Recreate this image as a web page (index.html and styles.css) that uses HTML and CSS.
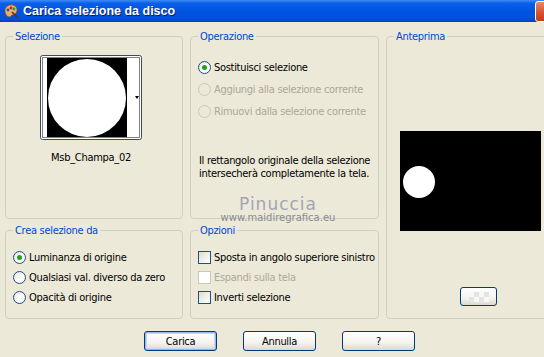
FILE: index.html
```html
<!DOCTYPE html>
<html lang="it">
<head>
    <meta charset="UTF-8">
    <title>Carica selezione da disco</title>
    <link rel="stylesheet" href="styles.css">
</head>
<body>
    <div class="titlebar">
        <svg class="app-icon" width="16" height="16" viewBox="0 0 16 16">
            <path d="M2 9 C1 4 6 1 10 2 C14 3 15 7 13 10 C11 13 9 11 8 13 C7 15 3 14 2 9 Z" fill="#e8b070" stroke="#8a4a20" stroke-width="0.8"/>
            <circle cx="5" cy="7" r="1.4" fill="#2050d0"/>
            <circle cx="8" cy="5" r="1.4" fill="#d02020"/>
            <circle cx="11" cy="6" r="1.4" fill="#20a030"/>
            <path d="M9 9 L15 15" stroke="#603010" stroke-width="1.6"/>
        </svg>
        <span class="title">Carica selezione da disco</span>
        <span class="close-btn"></span>
    </div>

    <div class="dialog">
        <div class="groups">
            <fieldset class="group sel-group">
                <legend>Selezione</legend>
                <div class="thumb">
                    <svg width="102" height="85" viewBox="0 0 102 85">
                        <rect x="0.5" y="0.5" width="101" height="84" rx="2" fill="#fff" stroke="#3c4a5a"/>
                        <rect x="2.5" y="2.5" width="97" height="80" fill="none" stroke="#000" stroke-dasharray="1 1"/>
                        <rect x="7" y="3" width="80" height="79" fill="#000"/>
                        <circle cx="47" cy="43" r="39" fill="#fff"/>
                        <path d="M95 41 L99 41 L97 44 Z" fill="#000"/>
                    </svg>
                </div>
                <div class="thumb-name">Msb_Champa_02</div>
            </fieldset>

            <fieldset class="group op-group">
                <legend>Operazione</legend>
                <div class="options op-options">
                    <div class="opt"><span class="radio checked"></span>Sostituisci selezione</div>
                    <div class="opt disabled"><span class="radio"></span>Aggiungi alla selezione corrente</div>
                    <div class="opt disabled"><span class="radio"></span>Rimuovi dalla selezione corrente</div>
                </div>
                <p class="info">Il rettangolo originale della selezione<br>intersecherà completamente la tela.</p>
            </fieldset>

            <fieldset class="group preview-group">
                <legend>Anteprima</legend>
                <div class="preview">
                    <svg width="141" height="100" viewBox="0 0 141 100">
                        <rect width="141" height="100" fill="#000"/>
                        <circle cx="19" cy="51" r="16" fill="#fff"/>
                    </svg>
                </div>
                <button class="btn small-btn"><span class="checker"></span></button>
            </fieldset>

            <fieldset class="group">
                <legend>Crea selezione da</legend>
                <div class="options">
                    <div class="opt"><span class="radio checked"></span>Luminanza di origine</div>
                    <div class="opt"><span class="radio"></span>Qualsiasi val. diverso da zero</div>
                    <div class="opt"><span class="radio"></span>Opacità di origine</div>
                </div>
            </fieldset>

            <fieldset class="group">
                <legend>Opzioni</legend>
                <div class="options">
                    <div class="opt"><span class="check"></span>Sposta in angolo superiore sinistro</div>
                    <div class="opt disabled"><span class="check"></span>Espandi sulla tela</div>
                    <div class="opt"><span class="check"></span>Inverti selezione</div>
                </div>
            </fieldset>
        </div>

        <div class="buttons">
            <button class="btn default-btn">Carica</button>
            <button class="btn">Annulla</button>
            <button class="btn">?</button>
        </div>

        <div class="watermark">
            <span class="wm-name">Pinuccia</span>
            <span class="wm-url">www.maidiregrafica.eu</span>
        </div>
    </div>
</body>
</html>
```

FILE: styles.css
```css
body {
    margin: 0;
    width: 544px;
    height: 357px;
    overflow: hidden;
    background: #ece9d8;
    font-family: 'DejaVu Sans Condensed', 'Liberation Sans', sans-serif;
    font-size: 11px;
    letter-spacing: -0.3px;
    color: #000;
}
.titlebar {
    height: 22px;
    display: flex;
    align-items: center;
    background: linear-gradient(to bottom, #3d8cf5 0%, #0a5fe8 15%, #0054e3 50%, #0150dc 85%, #0a3fb8 100%);
    padding-left: 3px;
}
.app-icon {
    flex-shrink: 0;
}
.title {
    margin-left: 4px;
    color: #fff;
    font-family: 'Liberation Sans', Arial, sans-serif;
    font-weight: bold;
    font-size: 12.5px;
    letter-spacing: 0;
    text-shadow: 1px 1px 0 #0a1f70;
}
.close-btn {
    margin-left: auto;
    margin-right: -14px;
    width: 21px;
    height: 19px;
    border: 1px solid #fff;
    border-radius: 3px;
    background: linear-gradient(to bottom, #e88a6a, #d4502e 60%, #c23c1c);
}
.dialog {
    position: relative;
    padding: 8px 0 0 5px;
}
.groups {
    display: grid;
    grid-template-columns: 178px 189px 170px;
    grid-template-rows: 189px 95px;
    column-gap: 7px;
    row-gap: 5px;
}
.group {
    margin: 0;
    padding: 0 7px;
    min-width: 0;
    border: 1px solid #d0d0bf;
    border-radius: 4px;
    box-sizing: border-box;
}
.group legend {
    padding: 0 2px;
    color: #0046d5;
    line-height: 13px;
}
.preview-group {
    grid-row: 1 / 3;
    grid-column: 3;
}
.thumb {
    display: flex;
    justify-content: center;
    margin-top: 12px;
    margin-right: 6px;
}
.thumb svg {
    display: block;
}
.thumb-name {
    text-align: center;
    margin-top: 11px;
    margin-right: 6px;
}
.options {
    display: flex;
    flex-direction: column;
    margin-top: 10px;
}
.op-options {
    margin-top: 13px;
}
.opt {
    display: flex;
    align-items: center;
    height: 20px;
    gap: 3px;
    white-space: nowrap;
}
.op-options .opt {
    height: 22px;
}
.opt.disabled {
    color: #aca899;
}
.radio {
    width: 11px;
    height: 11px;
    border: 1px solid #1c5180;
    border-radius: 50%;
    background: radial-gradient(circle at 65% 65%, #fff 30%, #dcdcd7);
    position: relative;
    flex-shrink: 0;
}
.radio.checked::after {
    content: "";
    position: absolute;
    left: 3px;
    top: 3px;
    width: 5px;
    height: 5px;
    border-radius: 50%;
    background: #21a121;
}
.disabled .radio {
    border-color: #cac8bb;
    background: none;
}
.check {
    width: 11px;
    height: 11px;
    border: 1px solid #1c5180;
    background: linear-gradient(135deg, #dcdcd7, #fff);
    flex-shrink: 0;
}
.disabled .check {
    border-color: #cac8bb;
    background: #fff;
}
.info {
    margin: 32px 0 0 1px;
    line-height: 13px;
    white-space: nowrap;
}
.preview {
    margin: 88px 0 0 6px;
}
.preview svg {
    display: block;
}
.btn {
    width: 73px;
    height: 20px;
    padding: 0;
    font-family: 'DejaVu Sans Condensed', 'Liberation Sans', sans-serif;
    font-size: 11px;
    letter-spacing: -0.3px;
    color: #000;
    border: 1px solid #003c74;
    border-radius: 3px;
    background: linear-gradient(to bottom, #fff, #f4f3ee 60%, #dcd9cc);
}
.default-btn {
    box-shadow: inset 0 0 0 1px #98b8ea, inset 0 0 0 2px #c6d8f6;
}
.small-btn {
    display: flex;
    align-items: center;
    justify-content: center;
    width: 37px;
    height: 19px;
    margin: 56px 0 0 66px;
}
.checker {
    width: 20px;
    height: 10px;
    background: repeating-conic-gradient(#e4e4e4 0 25%, #f8f8f8 0 50%) 0 0 / 10px 10px;
}
.buttons {
    display: flex;
    gap: 26px;
    margin-top: 12px;
    padding-left: 139px;
}
.watermark {
    position: absolute;
    left: 218px;
    top: 174px;
    width: 120px;
    display: flex;
    flex-direction: column;
    align-items: center;
    pointer-events: none;
    letter-spacing: 0;
}
.wm-name {
    font-family: 'DejaVu Sans', sans-serif;
    font-size: 17px;
    letter-spacing: 1px;
    color: #a4a4b4;
    line-height: 16px;
}
.wm-url {
    font-family: 'DejaVu Sans', sans-serif;
    font-size: 10px;
    color: #8a8a96;
    line-height: 11px;
}
```
